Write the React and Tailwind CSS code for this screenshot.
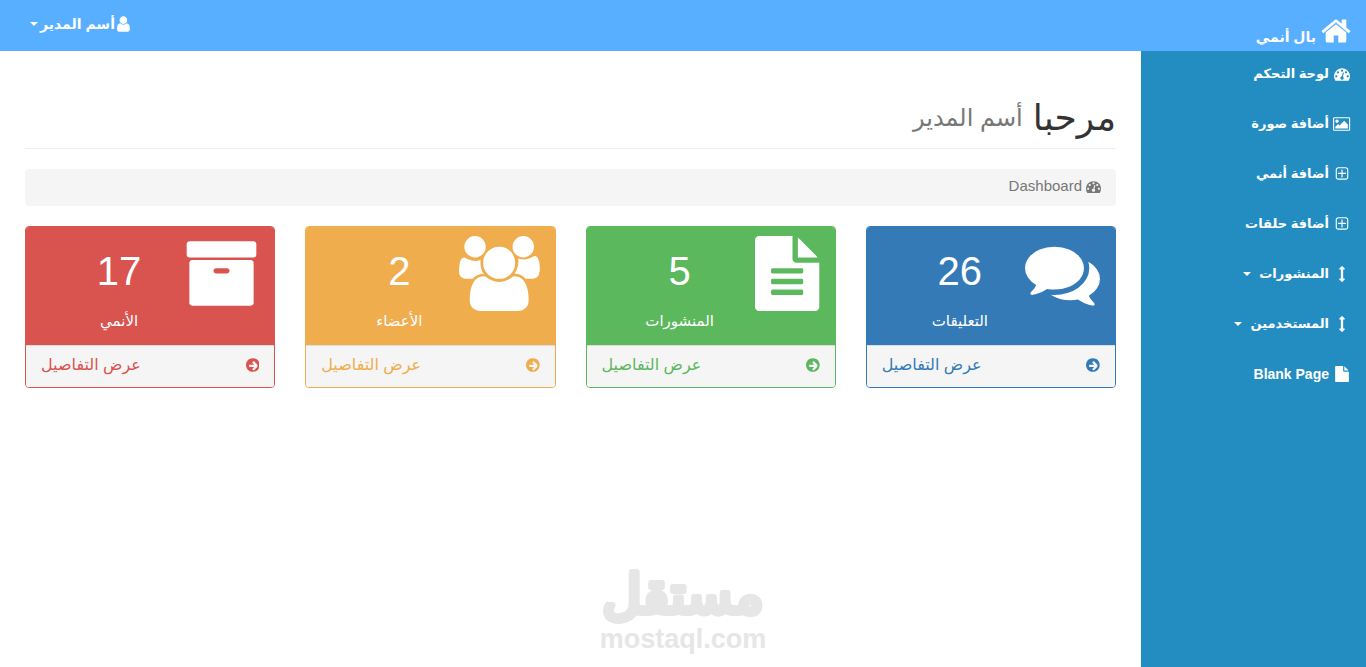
import React from 'react'

const icons = {
  home: { box: '0 0 1792 1792', d: 'M1472 992v480q0 26-19 45t-45 19h-384v-384h-256v384h-384q-26 0-45-19t-19-45v-480q0-1 .5-3t.5-3l575-474 575 474q1 2 1 6zm223-69l-62 74q-8 9-21 11h-3q-13 0-21-7l-692-577-692 577q-12 8-24 7-13-2-21-11l-62-74q-8-10-7-23.5t11-21.5l719-599q32-26 76-26t76 26l244 204v-195q0-14 9-23t23-9h192q14 0 23 9t9 23v408l219 182q10 8 11 21.5t-7 23.5z' },
  user: { box: '256 0 1280 1792', d: 'M1536 1399q0 109-62.5 187t-150.5 78h-854q-88 0-150.5-78t-62.5-187q0-85 8.5-160.5t31.5-152 58.5-131 94-89 134.5-34.5q131 128 313 128t313-128q76 0 134.5 34.5t94 89 58.5 131 31.5 152 8.5 160.5zm-256-887q0 159-112.5 271.5t-271.5 112.5-271.5-112.5-112.5-271.5 112.5-271.5 271.5-112.5 271.5 112.5 112.5 271.5z' },
  dashboard: { box: '0 0 1792 1792', d: 'M384 1152q0-53-37.5-90.5t-90.5-37.5-90.5 37.5-37.5 90.5 37.5 90.5 90.5 37.5 90.5-37.5 37.5-90.5zm192-448q0-53-37.5-90.5t-90.5-37.5-90.5 37.5-37.5 90.5 37.5 90.5 90.5 37.5 90.5-37.5 37.5-90.5zm428 481l101-382q6-26-7.5-48.5t-38.5-29.5-48 6.5-30 39.5l-101 382q-60 5-107 43.5t-63 98.5q-20 77 20 146t117 89 146-20 89-117q16-60-6-117t-72-91zm660-33q0-53-37.5-90.5t-90.5-37.5-90.5 37.5-37.5 90.5 37.5 90.5 90.5 37.5 90.5-37.5 37.5-90.5zm-640-640q0-53-37.5-90.5t-90.5-37.5-90.5 37.5-37.5 90.5 37.5 90.5 90.5 37.5 90.5-37.5 37.5-90.5zm448 192q0-53-37.5-90.5t-90.5-37.5-90.5 37.5-37.5 90.5 37.5 90.5 90.5 37.5 90.5-37.5 37.5-90.5zm320 448q0 261-141 483-19 29-54 29h-1402q-35 0-54-29-141-221-141-483 0-182 71-348t191-286 286-191 348-71 348 71 286 191 191 286 71 348z' },
  picture: { box: '-64 0 1920 1792', d: 'M576 576q0 80-56 136t-136 56-136-56-56-136 56-136 136-56 136 56 56 136zm1024 384v448h-1408v-192l320-320 160 160 512-512zm96-704h-1600q-13 0-22.5 9.5t-9.5 22.5v1216q0 13 9.5 22.5t22.5 9.5h1600q13 0 22.5-9.5t9.5-22.5v-1216q0-13-9.5-22.5t-22.5-9.5zm160 32v1216q0 66-47 113t-113 47h-1600q-66 0-113-47t-47-113v-1216q0-66 47-113t113-47h1600q66 0 113 47t47 113z' },
  plus: { box: '0 0 1792 1792', d: 'M1344 800v64q0 14-9 23t-23 9h-352v352q0 14-9 23t-23 9h-64q-14 0-23-9t-9-23v-352h-352q-14 0-23-9t-9-23v-64q0-14 9-23t23-9h352v-352q0-14 9-23t23-9h64q14 0 23 9t9 23v352h352q14 0 23 9t9 23zm128 448v-832q0-66-47-113t-113-47h-832q-66 0-113 47t-47 113v832q0 66 47 113t113 47h832q66 0 113-47t47-113zm128-832v832q0 119-84.5 203.5t-203.5 84.5h-832q-119 0-203.5-84.5t-84.5-203.5v-832q0-119 84.5-203.5t203.5-84.5h832q119 0 203.5 84.5t84.5 203.5z' },
  arrows: { box: '0 0 1792 1792', d: 'M1216 320q0 26-19 45t-45 19h-128v1024h128q26 0 45 19t19 45-19 45l-256 256q-19 19-45 19t-45-19l-256-256q-19-19-19-45t19-45 45-19h128v-1024h-128q-26 0-45-19t-19-45 19-45l256-256q19-19 45-19t45 19l256 256q19 19 19 45z' },
  file: { box: '0 0 1792 1792', d: 'M1152 512v-472q22 14 36 28l408 408q14 14 28 36h-472zm-128 32q0 40 28 68t68 28h544v1056q0 40-28 68t-68 28h-1344q-40 0-68-28t-28-68v-1600q0-40 28-68t68-28h800v544z' },
  arrowCircle: { box: '128 0 1536 1792', d: 'M1413 896q0-27-18-45l-91-91-271-271q-18-18-45-18t-45 18l-91 91q-18 18-18 45t18 45l189 189h-502q-26 0-45 19t-19 45v128q0 26 19 45t45 19h502l-189 189q-19 19-19 45t19 45l91 91q18 18 45 18t45-18l271-271 91-91q18-18 18-45zm251 0q0 209-103 385.5t-279.5 279.5-385.5 103-385.5-103-279.5-279.5-103-385.5 103-385.5 279.5-279.5 385.5-103 385.5 103 279.5 279.5 103 385.5z' },
  comments: { box: '0 0 1792 1792', d: 'M1408 768q0 139-94 257t-256.5 186.5-353.5 68.5q-86 0-176-16-124 88-278 128-36 9-86 16h-3q-11 0-20.5-8t-11.5-21q-1-3-1-6.5t.5-6.5 2-6l2.5-5 3.5-5.5 4-5 4.5-5 4-4.5q5-6 23-25t26-29.5 22.5-29 25-38.5 20.5-44q-124-72-195-177t-71-224q0-139 94-257t256.5-186.5 353.5-68.5 353.5 68.5 256.5 186.5 94 257zm384 256q0 120-71 224.5t-195 176.5q10 24 20.5 44t25 38.5 22.5 29 26 29.5 23 25q1 1 4 4.5t4.5 5 4 5 3.5 5.5l2.5 5 2 6 .5 6.5-1 6.5q-3 14-13 22t-22 7q-50-7-86-16-154-40-278-128-90 16-176 16-271 0-472-132 58 4 88 4 161 0 309-45t264-129q125-92 192-212t67-254q0-77-23-152 129 71 204 178t75 230z' },
  fileText: { box: '128 0 1536 1792', d: 'M1596 476q14 14 28 36h-472v-472q22 14 36 28zm-476 164h544v1056q0 40-28 68t-68 28h-1344q-40 0-68-28t-28-68v-1600q0-40 28-68t68-28h800v544q0 40 28 68t68 28zm160 736v-64q0-14-9-23t-23-9h-704q-14 0-23 9t-9 23v64q0 14 9 23t23 9h704q14 0 23-9t9-23zm0-256v-64q0-14-9-23t-23-9h-704q-14 0-23 9t-9 23v64q0 14 9 23t23 9h704q14 0 23-9t9-23zm0-256v-64q0-14-9-23t-23-9h-704q-14 0-23 9t-9 23v64q0 14 9 23t23 9h704q14 0 23-9t9-23z' },
  users: { box: '64 0 1920 1792', d: 'M657 896q-162 5-265 128h-134q-82 0-138-40.5t-56-118.5q0-353 124-353 6 0 43.5 21t97.5 42.5 119 21.5q67 0 133-23-5 37-5 66 0 159 93 293zm1071 637q0 120-73 189.5t-194 69.5h-874q-121 0-194-69.5t-73-189.5q0-53 3.5-103.5t14-109 26.5-108.5 43-97.5 62-81 85.5-53.5 111.5-20q10 0 43 21.5t73 48 107 48 135 21.5 135-21.5 107-48 73-48 43-21.5q61 0 111.5 20t85.5 53.5 62 81 43 97.5 26.5 108.5 14 109 3.5 103.5zm-1024-1277q0 106-75 181t-181 75-181-75-75-181 75-181 181-75 181 75 75 181zm704 384q0 159-112.5 271.5t-271.5 112.5-271.5-112.5-112.5-271.5 112.5-271.5 271.5-112.5 271.5 112.5 112.5 271.5zm576 225q0 78-56 118.5t-138 40.5h-134q-103-123-265-128 93-134 93-293 0-29-5-66 66 23 133 23 59 0 119-21.5t97.5-42.5 43.5-21q124 0 124 353zm-128-609q0 106-75 181t-181 75-181-75-75-181 75-181 181-75 181 75 75 181z' },
  archive: { box: '0 0 1792 1792', d: 'M1088 832q0-26-19-45t-45-19h-256q-26 0-45 19t-19 45 19 45 45 19h256q26 0 45-19t19-45zm576-192v960q0 26-19 45t-45 19h-1408q-26 0-45-19t-19-45v-960q0-26 19-45t45-19h1408q26 0 45 19t19 45zm64-448v256q0 26-19 45t-45 19h-1536q-26 0-45-19t-19-45v-256q0-26 19-45t45-19h1536q26 0 45 19t19 45z' },
}

function Icon({ name, className }) {
  return (
    <svg viewBox={icons[name].box} className={className} fill="currentColor" aria-hidden="true">
      <path d={icons[name].d} />
    </svg>
  )
}

function Caret() {
  return <span className="border-x-4 border-t-4 border-x-transparent border-t-white"></span>
}

const links = [
  { icon: 'dashboard', text: 'لوحة التحكم' },
  { icon: 'picture', text: 'أضافة صورة' },
  { icon: 'plus', text: 'أضافة أنمي' },
  { icon: 'plus', text: 'أضافة حلقات' },
  { icon: 'arrows', text: 'المنشورات', menu: true },
  { icon: 'arrows', text: 'المستخدمين', menu: true },
  { icon: 'file', text: 'Blank Page', latin: true },
]

const cards = [
  { icon: 'comments', count: 26, label: 'التعليقات', panel: 'border-[#337ab7]', head: 'bg-[#337ab7]', link: 'text-[#337ab7]' },
  { icon: 'fileText', count: 5, label: 'المنشورات', panel: 'border-[#5cb85c]', head: 'bg-[#5cb85c]', link: 'text-[#5cb85c]' },
  { icon: 'users', count: 2, label: 'الأعضاء', panel: 'border-[#f0ad4e]', head: 'bg-[#f0ad4e]', link: 'text-[#f0ad4e]' },
  { icon: 'archive', count: 17, label: 'الأنمي', panel: 'border-[#d9534f]', head: 'bg-[#d9534f]', link: 'text-[#d9534f]' },
]

function Header() {
  return (
    <header className="flex h-[51px] justify-between bg-[#58afff] pr-[14px] pl-[30px] font-bold text-white">
      <a href="#" className="flex items-end gap-1 pb-1">
        <Icon name="home" className="size-8" />
        <span className="text-sm leading-5">بال أنمي</span>
      </a>
      <button className="flex items-center gap-0.5 pb-1 whitespace-nowrap">
        <Icon name="user" className="h-[18px]" />
        <span className="text-sm leading-5">أسم المدير</span>
        <Caret />
      </button>
    </header>
  )
}

function Sidebar() {
  return (
    <nav className="w-[225px] shrink-0 bg-[#238dc1] pr-[15px] font-bold text-white">
      <ul>
        {links.map((item) => (
          <li key={item.text} className="mb-1">
            <a href="#" className="flex h-[46px] items-center gap-1">
              <span className="flex w-[18px] justify-center">
                <Icon name={item.icon} className="h-4" />
              </span>
              <span className={item.latin ? 'text-sm' : 'text-[13px]'}>{item.text}</span>
              {item.menu && <span className="flex pr-1"><Caret /></span>}
            </a>
          </li>
        ))}
      </ul>
    </nav>
  )
}

function Card({ card }) {
  return (
    <div className={`overflow-hidden rounded border ${card.panel}`}>
      <div className={`flex py-[9px] text-white ${card.head}`}>
        <div className="w-1/4 pr-[15px]">
          <Icon name={card.icon} className="h-[75px] max-w-none" />
        </div>
        <div className="w-3/4 text-center">
          <div className="text-[40px] leading-[70px]">{card.count}</div>
          <div className="text-[15px] leading-[30px]">{card.label}</div>
        </div>
      </div>
      <a href="#" className={`flex h-[42px] items-center justify-between border-t border-[#ddd] bg-[#f5f5f5] px-[15px] pb-1 text-base ${card.link}`}>
        <Icon name="arrowCircle" className="h-4" />
        <span className="leading-5">عرض التفاصيل</span>
      </a>
    </div>
  )
}

function App() {
  return (
    <div dir="rtl" className="relative flex min-h-screen flex-col bg-white font-['Liberation_Sans','DejaVu_Sans',sans-serif]">
      <Header />
      <div className="flex flex-1">
        <Sidebar />
        <main className="flex-1 px-[25px] pt-10">
          <h1 className="mb-5 flex h-[58px] items-center gap-2.5 border-b border-[#eee] pb-1 text-4xl text-[#333]">
            مرحبا
            <small className="text-2xl text-[#777]">أسم المدير</small>
          </h1>
          <ol className="mb-5 rounded bg-[#f5f5f5] px-[15px] text-[15px] text-[#777]">
            <li className="flex h-[37px] items-center gap-1 pb-0.5">
              <Icon name="dashboard" className="h-[15px]" />
              Dashboard
            </li>
          </ol>
          <div className="grid grid-cols-4 gap-[30px]">
            {cards.map((card) => (
              <Card key={card.icon} card={card} />
            ))}
          </div>
        </main>
      </div>
      <div className="absolute inset-x-0 bottom-3 flex flex-col items-center font-bold text-[#e6e6e6]">
        <svg viewBox="0 0 180 54" className="h-[54px] w-[180px] overflow-visible" role="img" aria-label="مستقل">
          <text x="90" y="44" textAnchor="middle" fontSize="54" fill="#e6e6e6" stroke="#e6e6e6" strokeWidth="6" strokeLinejoin="round" className="font-normal">مستقل</text>
        </svg>
        <div className="text-[27px] leading-8">mostaql.com</div>
      </div>
    </div>
  )
}

export default App
